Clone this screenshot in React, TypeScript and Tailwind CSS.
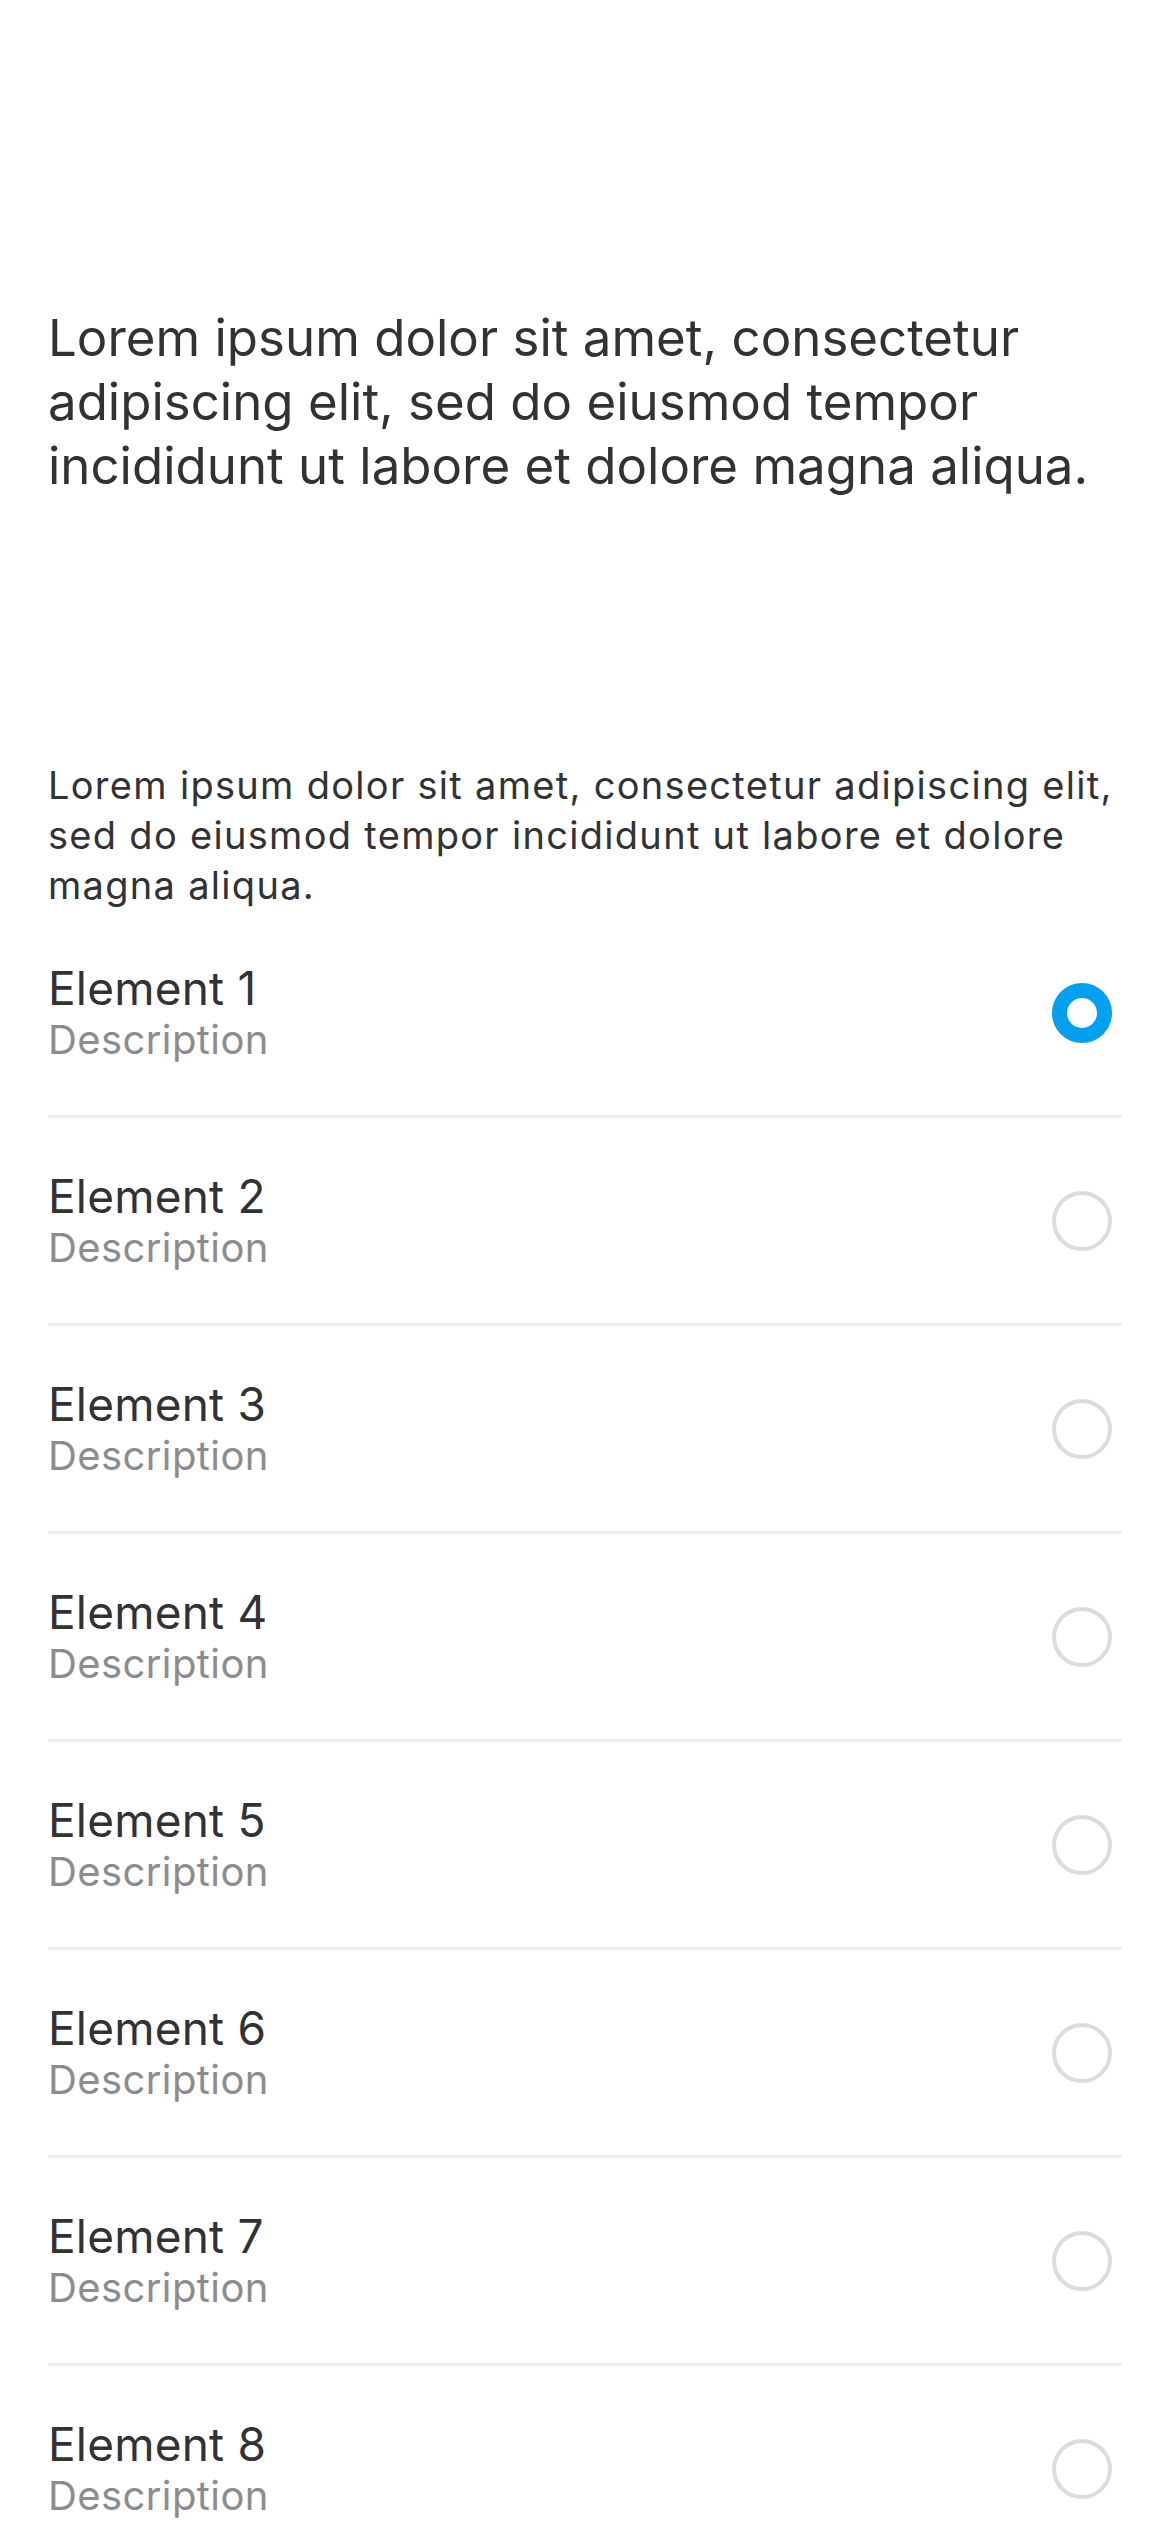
import { useState } from 'react';

interface Item {
  id: number;
  title: string;
  description: string;
}

const items: Item[] = Array.from({ length: 8 }, (_, i) => ({
  id: i + 1,
  title: `Element ${i + 1}`,
  description: 'Description',
}));

function Radio({ checked }: { checked: boolean }) {
  if (checked) {
    return <span className="block w-[60px] h-[60px] rounded-full border-[15px] border-[#03a0f1] bg-white" />;
  }
  return <span className="block w-[60px] h-[60px] rounded-full border-[4px] border-[#dcdcdc] bg-white" />;
}

export default function App() {
  const [selected, setSelected] = useState(1);

  return (
    <div
      className="min-h-[2532px] bg-white px-[48px] pt-[306px] text-[#323235]"
      style={{ fontFamily: 'Inter, "Noto Sans", sans-serif' }}
    >
      <h1 className="text-[51px] leading-[64px] font-normal">
        Lorem ipsum dolor sit amet, consectetur adipiscing elit, sed do eiusmod tempor incididunt ut labore et dolore
        magna aliqua.
      </h1>

      <p className="mt-[262px] text-[38px] leading-[50px] tracking-[1.3px]">
        Lorem ipsum dolor sit amet, consectetur adipiscing elit, sed do eiusmod tempor incididunt ut labore et dolore
        magna aliqua.
      </p>

      <ul>
        {items.map((item) => (
          <li
            key={item.id}
            onClick={() => setSelected(item.id)}
            className="flex items-center justify-between h-[208px] border-b-[3px] border-[#ececec] cursor-pointer"
          >
            <div className="flex flex-col">
              <span className="text-[46px] leading-[55px] tracking-[0.2px]">{item.title}</span>
              <span className="text-[40px] leading-[48px] tracking-[0.4px] text-[#8c8c90]">{item.description}</span>
            </div>
            <div className="pr-[10px]">
              <Radio checked={selected === item.id} />
            </div>
          </li>
        ))}
      </ul>
    </div>
  );
}
